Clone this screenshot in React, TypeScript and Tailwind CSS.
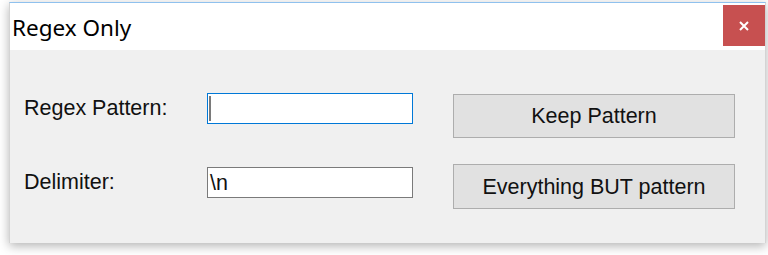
import React from "react";

export default function App() {
  return (
    <div className="w-[768px] h-[255px] bg-white overflow-hidden pt-[2px] pl-[9px]">
      <div className="w-[757px] h-[241px] flex flex-col border-t border-t-[#8fc1ee] border-x border-x-[#d4d4d4] shadow-[0_3px_10px_rgba(0,0,0,0.3)]">
        {/* title bar */}
        <div className="h-[47px] bg-white flex items-start justify-between">
          <span className="mt-[13px] ml-[2px] text-[22.5px] leading-[24px] text-black" style={{ fontFamily: '"Noto Sans", "Open Sans", sans-serif' }}>
            Regex Only
          </span>
          <button className="mt-[2px] w-[42px] h-[41px] bg-[#c75050] flex items-center justify-center">
            <svg width="10" height="10" viewBox="0 0 10 10">
              <path d="M1 1 L9 9 M9 1 L1 9" stroke="white" strokeWidth="2" />
            </svg>
          </button>
        </div>

        {/* body */}
        <div className="flex-1 bg-[#f0f0f0] pt-[43px] pl-[14px] flex flex-col gap-[26px] text-[21.5px] text-[#111]" style={{ fontFamily: '"Liberation Sans", Arial, sans-serif' }}>
          <div className="flex items-start">
            <div className="w-[183px] mt-[3px] leading-[24px]">Regex Pattern:</div>
            <div className="w-[206px] h-[31px] bg-white border border-[#0078d7] flex items-center pl-[1px]">
              <div className="w-[2px] h-[25px] bg-[#7a7a7a]" />
            </div>
            <button className="ml-[40px] mt-[1px] w-[282px] h-[44px] bg-[#e1e1e1] border border-[#adadad] leading-[24px]">
              Keep Pattern
            </button>
          </div>
          <div className="flex items-start">
            <div className="w-[183px] mt-[6px] leading-[24px]">Delimiter:</div>
            <div className="mt-[3px] w-[206px] h-[31px] bg-white border border-[#7a7a7a] flex items-center pl-[2px] leading-[24px]">
              \n
            </div>
            <button className="ml-[40px] w-[282px] h-[45px] bg-[#e1e1e1] border border-[#adadad] leading-[24px]">
              Everything BUT pattern
            </button>
          </div>
        </div>
      </div>
    </div>
  );
}
